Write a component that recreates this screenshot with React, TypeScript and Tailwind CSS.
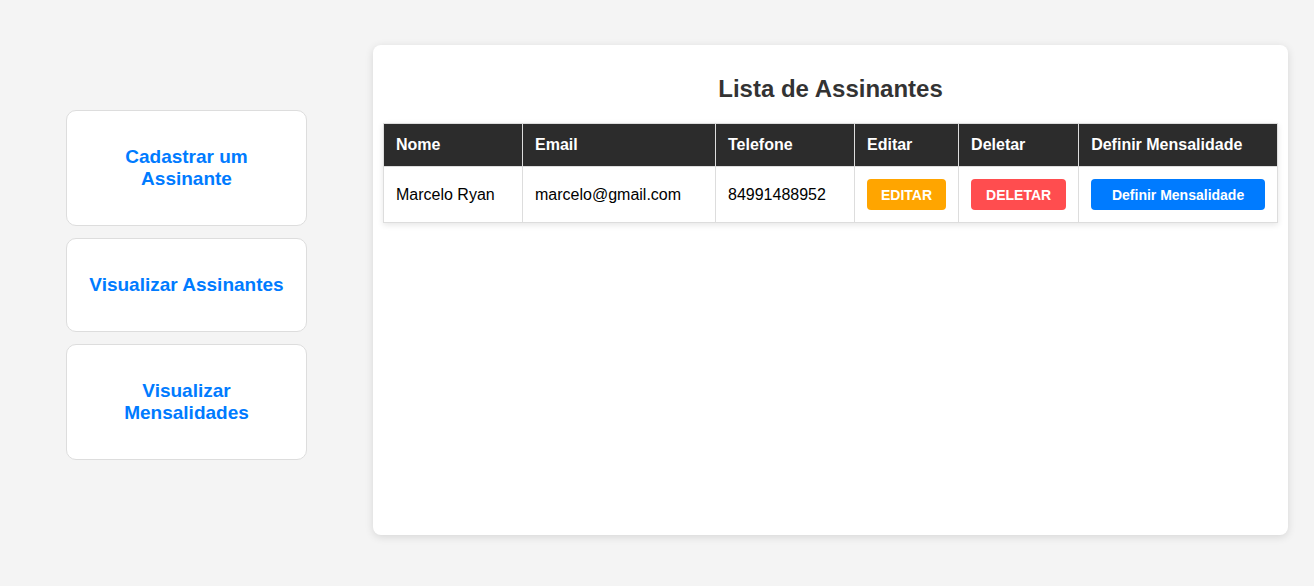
import React from 'react';

const App: React.FC = () => {
  // Dados dos assinantes
  const assinantes = [
    { id: 1, nome: 'Marcelo Ryan', email: 'marcelo@gmail.com', telefone: '84991488952' },
  ];

  const menu = ['Cadastrar um Assinante', 'Visualizar Assinantes', 'Visualizar Mensalidades'];

  return (
    <div
      className="min-h-[586px] w-full bg-[#f4f4f4] flex items-start"
      style={{ fontFamily: '"Liberation Sans", Arial, sans-serif' }}
    >
      <div className="ml-[66px] mt-[110px] w-[241px] flex flex-col gap-[12px]">
        {menu.map((item) => (
          <div
            key={item}
            className="bg-white border border-[#dddddd] rounded-[10px] py-[35px] px-[20px] text-center"
          >
            <span className="text-[#007bff] font-bold text-[19px] leading-[22px] block">
              {item === 'Cadastrar um Assinante' ? (
                <>Cadastrar um<br />Assinante</>
              ) : item === 'Visualizar Mensalidades' ? (
                <>Visualizar<br />Mensalidades</>
              ) : (
                item
              )}
            </span>
          </div>
        ))}
      </div>

      <div className="ml-[66px] mt-[45px] w-[915px] h-[490px] bg-white rounded-[8px] shadow-[0_2px_8px_rgba(0,0,0,0.12)] pl-[10px] pr-[10px] pt-[30px]">
        <h2 className="text-center text-[24px] leading-[28px] font-bold text-[#333333]">Lista de Assinantes</h2>
        <table className="mt-[20px] w-[895px] border-collapse shadow-[0_2px_6px_rgba(0,0,0,0.1)] text-[16px]">
          <thead>
            <tr className="bg-[#2c2c2c] text-white">
              <th className="w-[139px] border border-[#dddddd] px-[12px] py-[12px] text-left font-bold leading-[18px]">Nome</th>
              <th className="w-[193px] border border-[#dddddd] px-[12px] py-[12px] text-left font-bold leading-[18px]">Email</th>
              <th className="w-[139px] border border-[#dddddd] px-[12px] py-[12px] text-left font-bold leading-[18px]">Telefone</th>
              <th className="w-[104px] border border-[#dddddd] px-[12px] py-[12px] text-left font-bold leading-[18px]">Editar</th>
              <th className="w-[120px] border border-[#dddddd] px-[12px] py-[12px] text-left font-bold leading-[18px]">Deletar</th>
              <th className="border border-[#dddddd] px-[12px] py-[12px] text-left font-bold leading-[18px]">Definir Mensalidade</th>
            </tr>
          </thead>
          <tbody>
            {assinantes.map((a) => (
              <tr key={a.id} className="text-black">
                <td className="border border-[#dddddd] px-[12px] py-[12px]">{a.nome}</td>
                <td className="border border-[#dddddd] px-[12px] py-[12px]">{a.email}</td>
                <td className="border border-[#dddddd] px-[12px] py-[12px]">{a.telefone}</td>
                <td className="border border-[#dddddd] px-[12px] py-[12px]">
                  <button className="bg-[#ffa500] text-white font-bold text-[14px] leading-[16px] px-[14px] py-[7.5px] rounded-[4px]">
                    EDITAR
                  </button>
                </td>
                <td className="border border-[#dddddd] px-[12px] py-[12px]">
                  <button className="bg-[#ff4d4f] text-white font-bold text-[14px] leading-[16px] px-[15px] py-[7.5px] rounded-[4px]">
                    DELETAR
                  </button>
                </td>
                <td className="border border-[#dddddd] px-[12px] py-[12px]">
                  <button className="w-full bg-[#007bff] text-white font-bold text-[14px] leading-[16px] py-[7.5px] rounded-[4px]">
                    Definir Mensalidade
                  </button>
                </td>
              </tr>
            ))}
          </tbody>
        </table>
      </div>
    </div>
  );
};

export default App;
